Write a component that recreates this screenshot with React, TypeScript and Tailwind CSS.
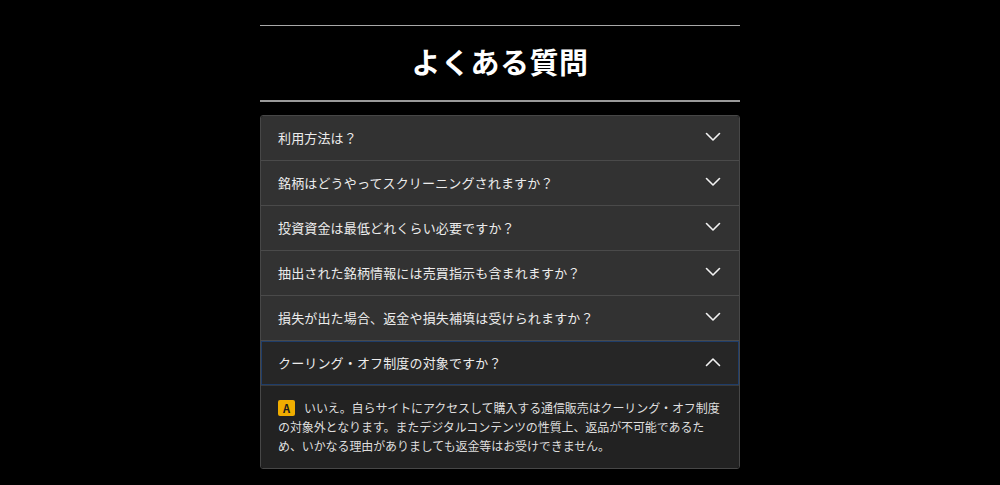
import {useState} from 'react';

const font = {
  fontFamily: '"Noto Sans CJK JP", "Noto Sans", sans-serif',
};

const faqs = [
  {q: '利用方法は？', a: ''},
  {q: '銘柄はどうやってスクリーニングされますか？', a: ''},
  {q: '投資資金は最低どれくらい必要ですか？', a: ''},
  {q: '抽出された銘柄情報には売買指示も含まれますか？', a: ''},
  {q: '損失が出た場合、返金や損失補填は受けられますか？', a: ''},
  {
    q: 'クーリング・オフ制度の対象ですか？',
    a: 'いいえ。自らサイトにアクセスして購入する通信販売はクーリング・オフ制度の対象外となります。またデジタルコンテンツの性質上、返品が不可能であるため、いかなる理由がありましても返金等はお受けできません。',
  },
];

function Chevron({open}: {open: boolean}) {
  return (
    <svg width="16" height="10" viewBox="0 0 16 10" className="shrink-0">
      <polyline
        points={open ? '1.5,8.5 8,2 14.5,8.5' : '1.5,1.5 8,8 14.5,1.5'}
        fill="none"
        stroke="#f2f2f2"
        strokeWidth="1.6"
        strokeLinecap="round"
        strokeLinejoin="round"
      />
    </svg>
  );
}

export default function App() {
  const [open, setOpen] = useState(5);

  return (
    <div className="min-h-[485px] w-full bg-black" style={font}>
      <div className="mx-auto w-[480px] pt-[25px]">
        {/* Heading */}
        <div className="flex h-[75px] items-center justify-center border-t border-[#a8a8a8] pb-[4px]">
          <h2 className="text-[29px] font-bold leading-none tracking-[0.5px] text-white">
            よくある質問
          </h2>
        </div>
        <div className="h-[2px] bg-[#9a9a9a]" />

        {/* Accordion */}
        <div className="mt-[13px] overflow-hidden rounded-[3px] border border-[#474747]">
          {faqs.map((item, i) => {
            const isOpen = open === i;
            return (
              <div key={item.q} className={i > 0 ? 'border-t border-[#4a4a4a]' : ''}>
                <button
                  onClick={() => setOpen(isOpen ? -1 : i)}
                  className={
                    isOpen
                      ? 'flex h-[44px] w-full items-center justify-between bg-[#262626] pb-[2px] pl-[17px] pr-[18px] text-left outline outline-1 -outline-offset-1 outline-[#1f3d69]'
                      : 'flex h-[44px] w-full items-center justify-between bg-[#323232] pb-[2px] pl-[17px] pr-[18px] text-left'
                  }
                >
                  <span className="text-[13px] leading-none tracking-[0.15px] text-[#ececec]">
                    {item.q}
                  </span>
                  <Chevron open={isOpen} />
                </button>
                {isOpen && item.a && (
                  <div className="border-t border-[#3a3a3a] bg-[#222222] px-[17px] pb-[13px] pt-[12px]">
                    <div className="text-[12px] leading-[19px] tracking-[-0.1px] text-[#dedede]">
                      <span className="float-left mr-[9px] mt-[2px] h-[16px] w-[17px] rounded-[2px] bg-[#f0ad00] text-center text-[11px] font-bold leading-[16px] tracking-normal text-[#1a1a1a]">
                        A
                      </span>
                      <span>{item.a}</span>
                    </div>
                  </div>
                )}
              </div>
            );
          })}
        </div>
      </div>
    </div>
  );
}
